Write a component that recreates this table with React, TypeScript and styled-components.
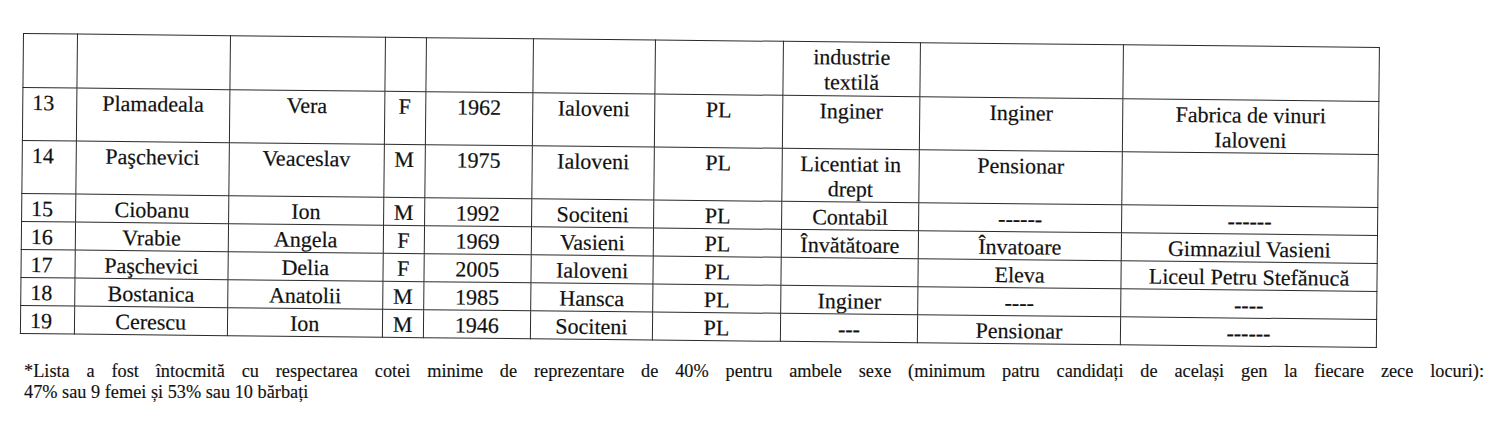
import * as React from "react";
import styled, { createGlobalStyle } from "styled-components";

const GlobalStyle = createGlobalStyle`
  html, body {
    margin: 0;
    padding: 0;
    background: #ffffff;
  }
  body {
    font-family: "Liberation Serif", "Times New Roman", serif;
    color: #111111;
  }
`;

const Page = styled.div`
  width: 1500px;
  height: 440px;
  box-sizing: border-box;
  padding: 33px 0 0 23px;
  display: flex;
  flex-direction: column;
  overflow: hidden;
`;

// the scan is a little skewed, the table leans to the right
const Sheet = styled.table`
  width: 1356px;
  table-layout: fixed;
  border-collapse: collapse;
  transform: rotate(0.59deg);
  transform-origin: top left;
  font-family: "Liberation Serif", "Times New Roman", serif;
  font-size: 22px;
  line-height: 25px;
  color: #111111;
  -webkit-text-stroke: 0.2px #111111;
`;

const Col = styled.col<{ $w: number }>`
  width: ${p => p.$w}px;
`;

const Row = styled.tr<{ $h: number }>`
  height: ${p => p.$h}px;
`;

const Cell = styled.td<{ $left?: boolean }>`
  border: 1.4px solid #2a2a2a;
  padding: ${p => (p.$left ? "2px 0 0 9px" : "2px 2px 0 2px")};
  vertical-align: top;
  text-align: ${p => (p.$left ? "left" : "center")};
  white-space: pre-line;
  overflow: hidden;
`;

const Note = styled.div`
  width: 1460px;
  margin: 27px 0 0 1px;
  font-family: "Liberation Serif", "Times New Roman", serif;
  font-size: 18.3px;
  line-height: 21px;
  color: #111111;
  -webkit-text-stroke: 0.15px #111111;
`;

// first line is spread to the full width, like a justified line before a manual break
const NoteLine = styled.div<{ $spread?: boolean }>`
  text-align: ${p => (p.$spread ? "justify" : "left")};
  text-align-last: ${p => (p.$spread ? "justify" : "auto")};
`;

const widths = [53.5, 153.5, 154.5, 41, 107.5, 122, 128, 137, 203, 256];

type Candidate = {
  cells: ReadonlyArray<string>;
  height: number;
};

const candidates: ReadonlyArray<Candidate> = [
  { cells: ["", "", "", "", "", "", "", "industrie\ntextilă", "", ""], height: 54 },
  {
    cells: ["13", "Plamadeala", "Vera", "F", "1962", "Ialoveni", "PL", "Inginer", "Inginer", "Fabrica de vinuri\nIaloveni"],
    height: 53.3
  },
  {
    cells: ["14", "Paşchevici", "Veaceslav", "M", "1975", "Ialoveni", "PL", "Licentiat in\ndrept", "Pensionar", ""],
    height: 52.7
  },
  { cells: ["15", "Ciobanu", "Ion", "M", "1992", "Sociteni", "PL", "Contabil", "------", "------"], height: 26.8 },
  {
    cells: ["16", "Vrabie", "Angela", "F", "1969", "Vasieni", "PL", "Învătătoare", "Învatoare", "Gimnaziul Vasieni"],
    height: 26.8
  },
  {
    cells: ["17", "Paşchevici", "Delia", "F", "2005", "Ialoveni", "PL", "", "Eleva", "Liceul Petru Stefănucă"],
    height: 26.8
  },
  { cells: ["18", "Bostanica", "Anatolii", "M", "1985", "Hansca", "PL", "Inginer", "----", "----"], height: 26.8 },
  { cells: ["19", "Cerescu", "Ion", "M", "1946", "Sociteni", "PL", "---", "Pensionar", "------"], height: 26.8 }
];

export default function App(): React.ReactElement {
  return (
    <>
      <GlobalStyle />
      <Page>
        <Sheet>
          <colgroup>
            {widths.map((w, i) => (
              <Col key={i} $w={w} />
            ))}
          </colgroup>
          <tbody>
            {candidates.map((c, r) => (
              <Row key={r} $h={c.height}>
                {c.cells.map((text, i) => (
                  <Cell key={i} $left={i === 0}>
                    {text}
                  </Cell>
                ))}
              </Row>
            ))}
          </tbody>
        </Sheet>
        <Note>
          <NoteLine $spread>
            *Lista a fost întocmită cu respectarea cotei minime de reprezentare de 40% pentru ambele sexe (minimum
            patru candidați de același gen la fiecare zece locuri):
          </NoteLine>
          <NoteLine>47% sau 9 femei și 53% sau 10 bărbați</NoteLine>
        </Note>
      </Page>
    </>
  );
}
